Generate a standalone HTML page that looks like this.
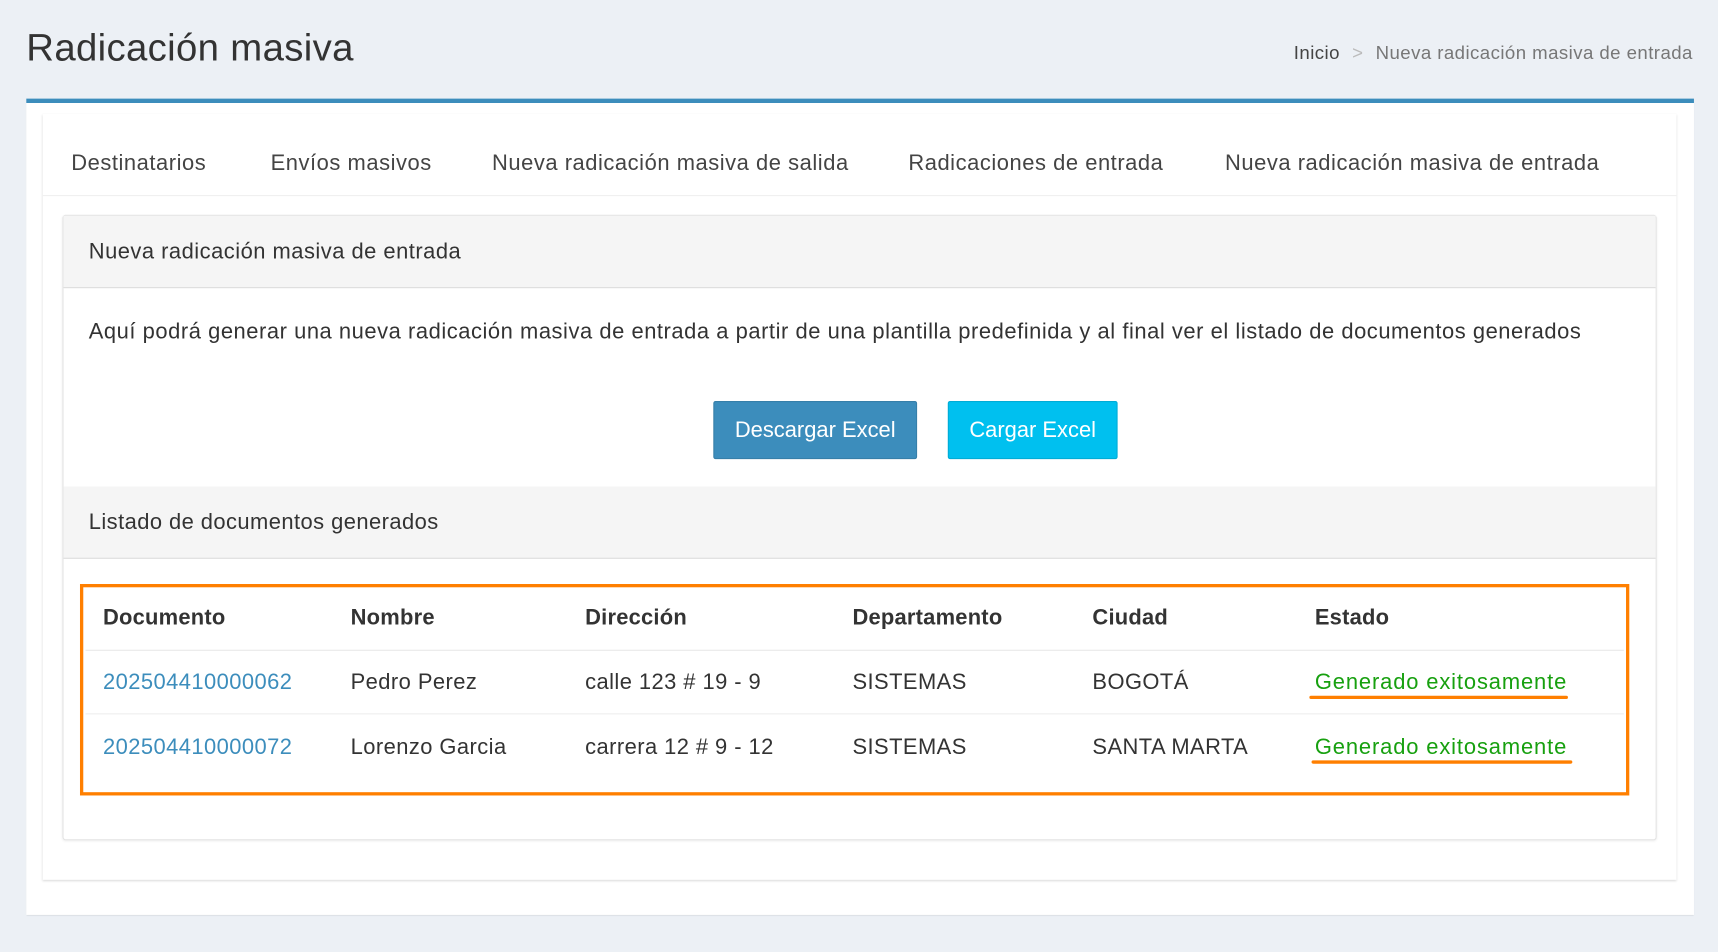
<!DOCTYPE html>
<html><head><meta charset="utf-8"><style>
html,body{margin:0;padding:0;background:#ecf0f5;width:1718px;height:952px;overflow:hidden}
#w{position:relative;width:1568px;height:869px;transform:scale(1.0957);transform-origin:0 0;font-family:"Liberation Sans",sans-serif;color:#333}
.a{position:absolute;white-space:nowrap}
</style></head><body><div id="w">
<div class="a" style="left:24px;top:24px;font-size:35px;letter-spacing:0.3px">Radicación masiva</div>
<div class="a" style="right:23px;top:39px;font-size:17px;color:#777;letter-spacing:0.4px"><span style="color:#444">Inicio</span> <span style="color:#bbb;padding:0 6px">&gt;</span> Nueva radicación masiva de entrada</div>
<div class="a" style="left:24px;top:90px;width:1522px;height:745px;background:#fff;border-top:4px solid #3c8dbc;box-sizing:border-box;box-shadow:0 1px 1px rgba(0,0,0,.1)"></div>
<div class="a" style="left:39px;top:104px;width:1491px;height:699px;background:#fff;box-shadow:0 1px 2px rgba(0,0,0,.15)"></div>
<div class="a" style="left:39px;top:178px;width:1491px;height:1px;background:#f0f0f0"></div>
<div style="font-size:20px;color:#444;letter-spacing:0.5px">
<div class="a" style="left:65px;top:138px">Destinatarios</div>
<div class="a" style="left:247px;top:138px">Envíos masivos</div>
<div class="a" style="left:449px;top:138px">Nueva radicación masiva de salida</div>
<div class="a" style="left:829px;top:138px">Radicaciones de entrada</div>
<div class="a" style="left:1118px;top:138px">Nueva radicación masiva de entrada</div>
</div>
<div class="a" style="left:57px;top:196px;width:1455px;height:571px;border:1px solid #e4e4e4;box-sizing:border-box;border-radius:3px;box-shadow:0 1px 2px rgba(0,0,0,.06)"></div>
<div class="a" style="left:58px;top:197px;width:1453px;height:65px;background:#f5f5f5;border-bottom:1px solid #ddd"></div>
<div class="a" style="left:81px;top:219px;font-size:20px;letter-spacing:0.45px">Nueva radicación masiva de entrada</div>
<div class="a" style="left:81px;top:292px;font-size:20px;letter-spacing:0.5px">Aquí podrá generar una nueva radicación masiva de entrada a partir de una plantilla predefinida y al final ver el listado de documentos generados</div>
<div class="a" style="left:651px;top:366px;width:186px;height:53px;background:#3c8dbc;border:1px solid #367fa9;box-sizing:border-box;color:#fff;font-size:20px;text-align:center;line-height:53px;border-radius:2px;letter-spacing:0px">Descargar Excel</div>
<div class="a" style="left:865px;top:366px;width:155px;height:53px;background:#00c0ef;border:1px solid #00acd6;box-sizing:border-box;color:#fff;font-size:20px;text-align:center;line-height:53px;border-radius:2px;letter-spacing:0px">Cargar Excel</div>
<div class="a" style="left:58px;top:444px;width:1453px;height:65px;background:#f5f5f5;border-bottom:1px solid #ddd"></div>
<div class="a" style="left:81px;top:466px;font-size:20px;letter-spacing:0.4px">Listado de documentos generados</div>
<div class="a" style="left:73px;top:533px;width:1414px;height:193px;border:3px solid #ff7f00;box-sizing:border-box"></div>
<div class="a" style="left:78px;top:593px;width:1404px;height:1px;background:#e8e8e8"></div>
<div class="a" style="left:78px;top:651px;width:1404px;height:1px;background:#eee"></div>
<div style="font-size:20px;letter-spacing:0.4px">
<div style="font-weight:bold;letter-spacing:0.2px">
<div class="a" style="left:94px;top:553px">Documento</div>
<div class="a" style="left:320px;top:553px">Nombre</div>
<div class="a" style="left:534px;top:553px">Dirección</div>
<div class="a" style="left:778px;top:553px">Departamento</div>
<div class="a" style="left:997px;top:553px">Ciudad</div>
<div class="a" style="left:1200px;top:553px">Estado</div>
</div>
<div class="a" style="left:94px;top:612px;color:#3c8dbc">202504410000062</div>
<div class="a" style="left:320px;top:612px">Pedro Perez</div>
<div class="a" style="left:534px;top:612px">calle 123 # 19 - 9</div>
<div class="a" style="left:778px;top:612px">SISTEMAS</div>
<div class="a" style="left:997px;top:612px">BOGOTÁ</div>
<div class="a" style="left:1200px;top:612px;color:#17a00f;letter-spacing:0.8px">Generado exitosamente</div>
<div class="a" style="left:94px;top:671px;color:#3c8dbc">202504410000072</div>
<div class="a" style="left:320px;top:671px">Lorenzo Garcia</div>
<div class="a" style="left:534px;top:671px">carrera 12 # 9 - 12</div>
<div class="a" style="left:778px;top:671px">SISTEMAS</div>
<div class="a" style="left:997px;top:671px">SANTA MARTA</div>
<div class="a" style="left:1200px;top:671px;color:#17a00f;letter-spacing:0.8px">Generado exitosamente</div>
</div>
<div class="a" style="left:1195px;top:635px;width:236px;height:3px;background:#ff7f00;border-radius:2px"></div>
<div class="a" style="left:1197px;top:694px;width:238px;height:3px;background:#ff7f00;border-radius:2px"></div>
</div></body></html>
